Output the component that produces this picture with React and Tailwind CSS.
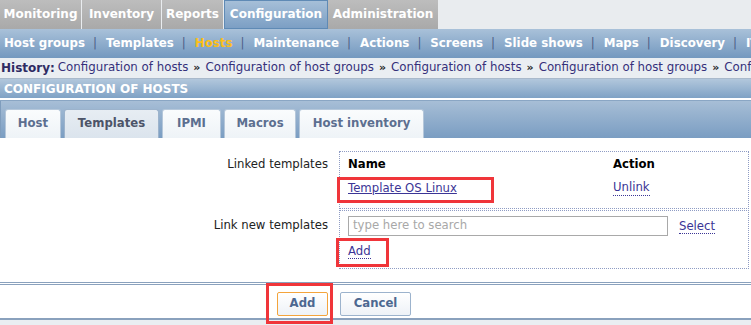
import React from "react";

const topTabs = [
  { label: "Monitoring", w: "w-[81px]" },
  { label: "Inventory", w: "w-[79px]" },
  { label: "Reports", w: "w-[61px]" },
  { label: "Configuration", w: "w-[104px]", active: true },
  { label: "Administration", w: "w-[110px]" },
];

const subNav = ["Host groups", "Templates", "Hosts", "Maintenance", "Actions", "Screens", "Slide shows", "Maps", "Discovery", "IT services"];

const history = ["Configuration of hosts", "Configuration of host groups", "Configuration of hosts", "Configuration of host groups", "Configuration of hosts"];

const formTabs = [
  { label: "Host", w: "w-[56px]" },
  { label: "Templates", w: "w-[95px]", active: true },
  { label: "IPMI", w: "w-[59px]" },
  { label: "Macros", w: "w-[72px]" },
  { label: "Host inventory", w: "w-[125px]" },
];

const linkCls = "text-[#3b3596] border-b border-dotted border-[#3b3596] leading-[14px] inline-block";

export default function App() {
  return (
    <div className="w-[751px] h-[325px] overflow-hidden bg-white text-[11.7px] font-['DejaVu_Sans',Verdana,sans-serif]">
      {/* main menu */}
      <div className="flex h-[29px] bg-[#e9ecef]">
        {topTabs.map((t) => (
          <div
            key={t.label}
            className={
              t.active
                ? `${t.w} shrink-0 flex items-center justify-center pb-[2px] border border-[#5f8ab5] bg-gradient-to-b from-[#a6bfd8] to-[#7c9fc4] font-bold text-[12px] text-white`
                : `${t.w} shrink-0 flex items-center justify-center pb-[2px] bg-gradient-to-b from-[#bdbdbd] to-[#a9a9a9] font-bold text-[12px] text-white mr-px`
            }
          >
            {t.label}
          </div>
        ))}
      </div>

      {/* sub menu */}
      <div className="flex items-center h-[29px] pl-[4px] bg-gradient-to-b from-[#a9c1d9] to-[#7398bf] font-bold text-[11.8px] whitespace-nowrap">
        {subNav.map((s, i) => (
          <React.Fragment key={s}>
            {i > 0 && <span className="ml-[8px] mr-[9px] font-normal text-[#4d5f88]">|</span>}
            <span className={s === "Hosts" ? "text-[#fcbf17]" : "text-white"}>{s}</span>
          </React.Fragment>
        ))}
      </div>

      {/* history */}
      <div className="flex items-center h-[21px] pl-[1px] bg-[#eaeef2] border-b border-[#a9b9cb] whitespace-nowrap text-[11.8px] text-[#35307a]">
        <span className="font-bold text-[12px] text-[#2e2b63] mr-[3px]">History:</span>
        {history.map((h, i) => (
          <React.Fragment key={i}>
            {i > 0 && <span className="font-bold text-[11px] text-[#222] px-[5px]">»</span>}
            <span>{h}</span>
          </React.Fragment>
        ))}
      </div>

      {/* header */}
      <div className="flex items-center h-[19px] pl-[4px] bg-gradient-to-b from-[#b2c7dc] to-[#7fa2c5] font-bold text-[12px] text-white">
        CONFIGURATION OF HOSTS
      </div>
      <div className="h-[3px] bg-white border-b border-[#8aa6c4]" />

      {/* form tabs */}
      <div className="flex items-end h-[37px] pl-[4px] gap-[3px] bg-gradient-to-b from-[#a7bed6] to-[#7a9dc2] border-l border-[#7f9dbd]">
        {formTabs.map((t) => (
          <div
            key={t.label}
            className={
              t.active
                ? `${t.w} h-[29px] flex items-center justify-center rounded-t-[3px] border border-b-0 border-[#9cb3cc] bg-gradient-to-b from-[#e7edf3] to-[#dbe4ed] font-bold text-[#4c5468]`
                : `${t.w} h-[29px] flex items-center justify-center rounded-t-[3px] border border-b-0 border-[#b5c7da] bg-gradient-to-b from-[#fafcfd] to-[#eef3f7] font-bold text-[#5c6f90]`
            }
          >
            {t.label}
          </div>
        ))}
      </div>

      {/* form body */}
      <div className="pt-[13px] h-[144px]">
        <div className="flex">
          <div className="w-[339px] shrink-0 text-right pr-[11px] pt-[5px] leading-[16px] text-[#222]">Linked templates</div>
          <div className="w-[410px] h-[58px] border border-dotted border-[#8f9cc4] pl-[8px] pr-[8px] pt-[4px]">
            <div className="flex font-bold text-black h-[16px] leading-[16px]">
              <span className="w-[265px]">Name</span>
              <span>Action</span>
            </div>
            <div className="flex mt-[8px] leading-[16px]">
              <span className="w-[265px]">
                <span className="relative inline-block text-[#3b3596] underline">
                  Template OS Linux
                  <span className="absolute -left-[11px] -top-[3px] w-[157px] h-[26px] border-[3px] border-[#f0353a]" />
                </span>
              </span>
              <span className={linkCls}>Unlink</span>
            </div>
          </div>
        </div>

        <div className="flex mt-[1px]">
          <div className="w-[339px] shrink-0 text-right pr-[11px] pt-[7px] leading-[16px] text-[#222]">Link new templates</div>
          <div className="w-[410px] h-[59px] border border-dotted border-[#8f9cc4] pl-[8px] pt-[5px]">
            <div className="flex items-center">
              <div className="w-[320px] h-[20px] border border-[#a9a9a9] pl-[4px] flex items-center text-[#a8a8a8]">type here to search</div>
              <span className={`ml-[11px] ${linkCls}`}>Select</span>
            </div>
            <div className="mt-[7px] h-[16px] leading-[16px]">
              <span className={`relative ${linkCls}`}>
                Add
                <span className="absolute -left-[12px] -top-[6px] w-[53px] h-[29px] border-[3px] border-[#f0353a]" />
              </span>
            </div>
          </div>
        </div>
      </div>

      {/* footer buttons */}
      <div className="border-t-[3px] border-double border-[#8aa1bd] h-[38px] flex items-start pt-[7px] pl-[277px] gap-[12px] border-b-[2px] border-b-[#8aa1bd]">
        <div className="relative">
          <div className="w-[51px] h-[24px] flex items-center justify-center rounded-[2px] border border-[#f4a43c] bg-gradient-to-b from-[#ffffff] to-[#eef2f7] font-bold text-[#4d6891]">Add</div>
          <span className="absolute -left-[11px] -top-[9px] w-[67px] h-[41px] border-[3px] border-[#f0353a]" />
        </div>
        <div className="w-[71px] h-[24px] flex items-center justify-center rounded-[2px] border border-[#9cb3cd] bg-gradient-to-b from-[#ffffff] to-[#eef2f7] font-bold text-[#4d6891]">Cancel</div>
      </div>
      <div className="h-[10px] bg-[#eaeef2]" />
    </div>
  );
}
